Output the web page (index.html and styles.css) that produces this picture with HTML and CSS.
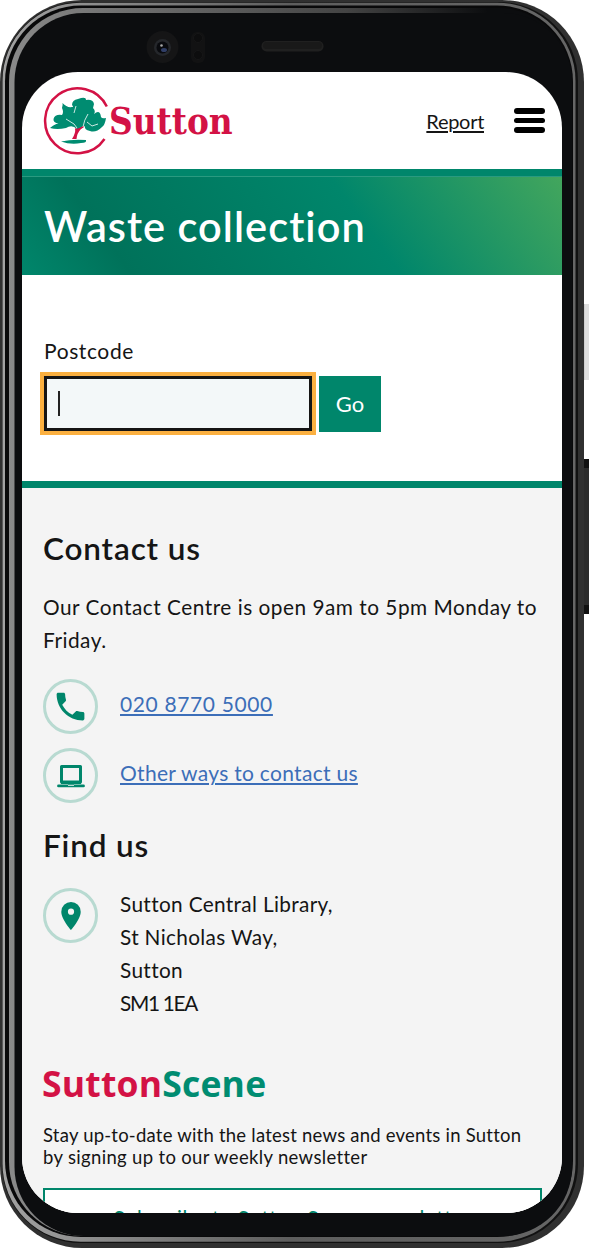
FILE: index.html
```html
<!DOCTYPE html>
<html lang="en">
<head>
<meta charset="utf-8">
<title>Waste collection</title>
<link rel="stylesheet" href="styles.css">
</head>
<body>
<div class="device">
  <svg class="frame" width="589" height="1248" viewBox="0 0 589 1248" aria-hidden="true">
    <defs>
      <linearGradient id="rim" x1="0" y1="0" x2="1" y2="0">
        <stop offset="0" stop-color="#a2a2a2"/><stop offset=".5" stop-color="#5e5e5e"/><stop offset="1" stop-color="#666"/>
      </linearGradient>
      <linearGradient id="shine" x1="0" y1="0" x2="1" y2="0">
        <stop offset="0" stop-color="#8a8a8a"/><stop offset=".2" stop-color="#707070"/><stop offset=".6" stop-color="#444"/><stop offset=".85" stop-color="#0c0d0f"/>
      </linearGradient>
      <linearGradient id="power" x1="0" y1="0" x2="1" y2="0">
        <stop offset="0" stop-color="#aaa"/><stop offset=".5" stop-color="#dedede"/>
      </linearGradient>
    </defs>
    <rect x="582" y="304" width="7" height="76" fill="url(#power)"/>
    <rect x="582" y="459" width="7" height="155" fill="#111"/>
    <rect x="584" y="468" width="5" height="137" fill="#2b2b2b"/>
    <rect x="0" y="0" width="584" height="1248" rx="82" fill="#303030"/>
    <rect x="2" y="2" width="576" height="1241" rx="79" fill="#111"/>
    <rect x="2.500" y="2.800" width="573" height="1239" rx="78" fill="url(#rim)"/>
    <rect x="5" y="5.500" width="568" height="1231.500" rx="76" fill="#09090a"/>
    <rect x="9" y="8" width="563" height="1228" rx="74" fill="url(#shine)"/>
    <rect x="14.500" y="13" width="557.500" height="1223" rx="69" fill="#0c0d0f"/>
    <circle cx="162.500" cy="47" r="16" fill="#151516"/>
    <circle cx="162.500" cy="47.500" r="8.500" fill="#25272b"/>
    <circle cx="162.500" cy="47.500" r="6" fill="#090a0e"/>
    <ellipse cx="164" cy="50" rx="3" ry="2" fill="#303e66"/>
    <circle cx="161.500" cy="45.500" r="1.300" fill="#a8a8a8"/>
    <rect x="191" y="32" width="14" height="31" rx="6" fill="#121213"/>
    <circle cx="198" cy="38" r="4.500" fill="#0d0d0e" stroke="#161617"/>
    <circle cx="198" cy="55" r="4.500" fill="#0d0d0e" stroke="#161617"/>
    <rect x="261.500" y="41" width="62" height="10.500" rx="5" fill="#202020"/>
    <rect x="263" y="42" width="59" height="7" rx="3.500" fill="#191919"/>
  </svg>

  <div class="screen">
    <header class="header">
      <div class="logo">
        <svg class="tree" width="66" height="70" viewBox="0 0 66 70" aria-hidden="true">
          <path d="M63.800 20.500 A32.500 32.500 0 1 0 61.500 53" fill="none" stroke="#d31245" stroke-width="2.500"/>
          <path d="M7 42 Q13 37 18 37 Q10 38 10.500 33 Q12 28 19 29 Q21 26 19 22 Q20 19 19.500 17 Q24 22 29 21 Q31 21 29 19 Q29 14 35 13 Q43 10 43 14 Q50 13 51 18 L50 22 Q53 25 51 28 Q57 23 58 31 Q59 33 63 32 Q62 39 59 41 Q53 47 47 45 Q41 44 42 40 Q38 44 34 43 Q29 38 23 42 Q14 44 7 42Z" fill="#008c71"/>
          <path d="M29 53 Q33 47 32 42 Q34 44 40 40 Q43 40 38 43 Q34 47 33.500 53Z" fill="#d31245"/>
          <path d="M18 55.500 Q29 53 43 54 Q44 57 38 57 Q28 59 18 55.500Z" fill="#008c71"/>
          <path d="M34 42 L31 38 L23 33 M40 41 Q41 34 45 28 M33 20 L31 27 M44 36 L49 40 L55 38" fill="none" stroke="#fff" stroke-width=".8"/>
        </svg>
        <span class="wordmark">Sutton</span>
      </div>
      <nav class="nav">
        <a class="report" href="#">Report</a>
        <span class="menu"><i></i><i></i><i></i></span>
      </nav>
    </header>

    <section class="hero"><h1 class="title">Waste collection</h1></section>

    <main class="lookup">
      <label class="label">Postcode</label>
      <div class="field-row">
        <div class="input"><span class="caret"></span></div>
        <button class="go"><span>Go</span></button>
      </div>
    </main>

    <footer class="footer">
      <h2 class="heading">Contact us</h2>
      <p class="hours">Our Contact Centre is open 9am to 5pm Monday to<br>Friday.</p>
      <div class="contact">
        <span class="badge"><svg width="37" height="37" viewBox="0 0 24 24"><path fill="#00866b" d="M6.620 10.790c1.440 2.830 3.760 5.140 6.590 6.590l2.200-2.200c.27-.27.67-.36 1.020-.24 1.120.37 2.330.57 3.570.57.55 0 1 .45 1 1V20c0 .55-.45 1-1 1-9.390 0-17-7.610-17-17 0-.55.45-1 1-1h3.500c.55 0 1 .45 1 1 0 1.250.2 2.450.57 3.570.11.35.03.74-.25 1.020l-2.200 2.200z"/></svg></span>
        <a class="link phone" href="#">020 8770 5000</a>
      </div>
      <div class="contact">
        <span class="badge"><svg width="28" height="24" viewBox="0 0 28 24"><path fill="none" stroke="#00866b" stroke-width="3" stroke-linejoin="round" d="M4.500 2.500h19v15.500h-19z"/><path fill="#00866b" fill-rule="evenodd" d="M1.500 20.500h25a1.200 1.200 0 0 1 0 2.800h-25a1.200 1.200 0 0 1 0-2.800zM4 17h20v4h-20zM11 20.300v1.500h6v-1.500z"/></svg></span>
        <a class="link other" href="#">Other ways to contact us</a>
      </div>
      <h2 class="heading find">Find us</h2>
      <div class="contact place">
        <span class="badge"><svg width="20" height="28" viewBox="0 0 20 28"><path fill="#00866b" fill-rule="evenodd" d="M10 0a9.700 9.700 0 0 0-9.700 9.700C.3 17 10 28 10 28s9.700-11 9.700-18.300A9.700 9.700 0 0 0 10 0zm0 6.600a3.100 3.100 0 1 1 0 6.200 3.100 3.100 0 0 1 0-6.200z"/></svg></span>
        <address class="address">Sutton Central Library,<br>St Nicholas Way,<br>Sutton<br><span class="code">SM1 1EA</span></address>
      </div>
      <div class="scene"><span class="red">Sutton</span><span class="green">Scene</span></div>
      <p class="news">Stay up-to-date with the latest news and events in Sutton<br><span class="weekly">by signing up to our weekly newsletter</span></p>
      <a class="subscribe" href="#">Subscribe to Sutton Scene newsletter</a>
    </footer>
  </div>
</div>
</body>
</html>
```
FILE: styles.css
```css
* { box-sizing: border-box; }
body { margin: 0; background: #fff; font-family: Lato, "Liberation Sans", sans-serif; font-variant-ligatures: none; color: #151515; }
.device { position: relative; width: 589px; height: 1248px; padding: 72px 27px 35px 22px; overflow: hidden; }
.frame { position: absolute; left: 0; top: 0; }
.screen { position: relative; width: 540px; height: 1140.500px; border-radius: 56px; overflow: hidden; background: #fff; }
.header { height: 96.500px; display: flex; justify-content: space-between; padding: 14px 17px 0 21px; }
.logo { display: flex; }
.tree { flex: none; }
.wordmark { font: bold 36.500px/72px "DejaVu Serif", serif; color: #d31245; transform: scaleX(.9); transform-origin: 0 50%; white-space: nowrap; width: 124px; }
.nav { display: flex; align-items: flex-start; gap: 30px; }
.report { font-size: 20px; line-height: 24px; margin-top: 23px; letter-spacing: -.3px; color: #151515; text-decoration-thickness: 1.500px; text-underline-offset: 2px; }
.menu { display: flex; flex-direction: column; gap: 4px; margin-top: 22px; }
.menu i { width: 31px; height: 5.700px; border-radius: 3px; background: #000; }
.hero { height: 106px; border-top: 7px solid #00866b; padding-left: 22px; background: linear-gradient(54deg, #00866b 0%, #00725a 18%, #00866b 62%, #43a65d 100%); box-shadow: inset 0 1px #2a9a80; }
.title { margin: 0; font-size: 41.500px; line-height: 100px; font-weight: 600; letter-spacing: 1.050px; color: #fff; white-space: nowrap; }
.lookup { height: 206.500px; padding: 62px 22px 0; }
.label { display: block; font-size: 21px; line-height: 28px; letter-spacing: .6px; }
.field-row { display: flex; gap: 7px; margin-top: 11.500px; }
.input { width: 268px; height: 55px; border: 3px solid #151515; background: #f3f8f9; outline: 4px solid #fbb040; padding: 12px 0 0 11px; }
.caret { display: block; width: 1.500px; height: 25px; background: #222; }
.go { width: 62px; height: 55.500px; border: 0; padding: 0; background: #00866b; color: #fff; font: 22px Lato, sans-serif; }
.footer { height: 732px; border-top: 7px solid #00866b; background: #f4f4f4; padding: 42px 20px 0 21px; }
.heading { margin: 0; font-size: 31.500px; line-height: 36px; font-weight: 600; letter-spacing: .85px; }
.hours { margin: 24px 0 0; font-size: 20.800px; line-height: 33px; letter-spacing: .51px; white-space: nowrap; }
.contact { display: flex; gap: 22px; align-items: flex-start; margin-top: 14px; }
.hours + .contact { margin-top: 23px; }
.badge { width: 55px; height: 55px; flex: none; border: 3px solid #b8dad1; border-radius: 50%; display: flex; align-items: center; justify-content: center; }
.link { color: #3c6eb8; font-size: 21px; line-height: 33px; margin-top: 8px; text-decoration-thickness: 1.500px; text-underline-offset: 2px; }
.phone { letter-spacing: .63px; }
.other { letter-spacing: .3px; }
.find { margin-top: 24px; }
.address { font-style: normal; font-size: 20.800px; line-height: 33px; letter-spacing: .34px; margin-top: -1px; }
.code { letter-spacing: -1.300px; }
.place { margin-top: 25px; }
.scene { font: bold 35.500px/44px "Open Sans", sans-serif; margin-top: 42px; color: #d31245; letter-spacing: .2px; margin-left: -1px; }
.green { color: #008c71; }
.news { margin: 19px 0 0; font-size: 18.500px; line-height: 22px; letter-spacing: .22px; white-space: nowrap; }
.weekly { letter-spacing: .33px; }
.subscribe { display: block; height: 60px; border: 2.500px solid #00866b; background: #fff; margin-top: 20px; text-align: center; color: #00866b; font-size: 20.500px; line-height: 56px; letter-spacing: .6px; text-decoration: none; }
```
